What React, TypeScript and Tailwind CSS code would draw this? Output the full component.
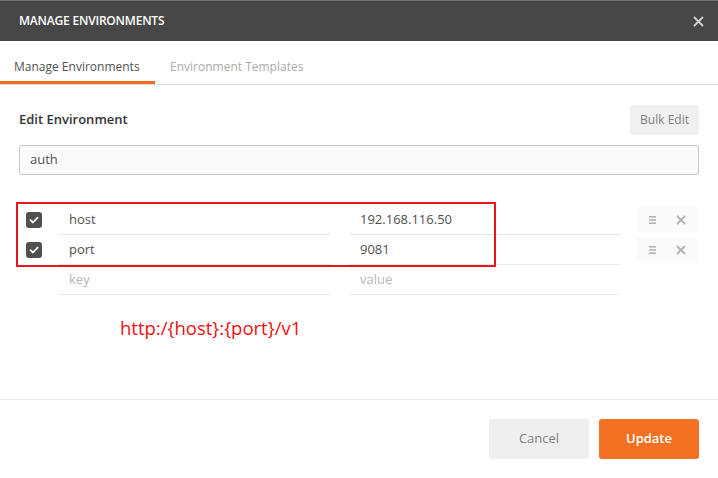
import React from "react";

const rows = [
  { key: "host", value: "192.168.116.50", on: true },
  { key: "port", value: "9081", on: true },
];

function Check() {
  return (
    <div className="ml-[7px] flex h-4 w-4 items-center justify-center rounded-[3px] bg-[#505050]">
      <svg width="10" height="10" viewBox="0 0 10 10" fill="none">
        <path d="M1.5 5.2 L4 7.5 L8.6 2.6" stroke="white" strokeWidth="1.8" strokeLinecap="round" strokeLinejoin="round" />
      </svg>
    </div>
  );
}

function Actions() {
  return (
    <div className="ml-[17px] flex h-[26px] w-[60px] items-center justify-between rounded-[3px] bg-[#fafafa] pl-[12px] pr-[11px]">
      <svg width="7" height="10" viewBox="0 0 7 10">
        <rect x="0" y="1" width="7" height="1.6" fill="#b3b3b3" />
        <rect x="0" y="4.2" width="7" height="1.6" fill="#b3b3b3" />
        <rect x="0" y="7.4" width="7" height="1.6" fill="#b3b3b3" />
      </svg>
      <svg width="10" height="10" viewBox="0 0 10 10">
        <path d="M1 1 L9 9 M9 1 L1 9" stroke="#b3b3b3" strokeWidth="1.8" />
      </svg>
    </div>
  );
}

export default function App() {
  return (
    <div
      className="relative flex h-[478px] w-[718px] flex-col bg-white text-[#505050]"
      style={{ fontFamily: '"Open Sans", "Noto Sans", sans-serif' }}
    >
      <div className="flex h-[41px] items-center justify-between border-t border-[#707070] bg-[#474747] pl-[19px] pr-[14px]">
        <span className="text-[12px] font-semibold tracking-[-0.2px] text-white">MANAGE ENVIRONMENTS</span>
        <svg width="11" height="11" viewBox="0 0 11 11">
          <path d="M1 1 L10 10 M10 1 L1 10" stroke="#d0d0d0" strokeWidth="1.8" />
        </svg>
      </div>

      <div className="flex h-[44px] border-b border-[#dcdcdc]">
        <div className="flex w-[155px] items-center border-b-[3px] border-[#f26b21] pl-[14px] pt-[12px] text-[12px] text-[#505050]">
          Manage Environments
        </div>
        <div className="flex items-center pl-[15px] pt-[9px] text-[12px] text-[#aaaaaa]">Environment Templates</div>
      </div>

      <div className="flex flex-col px-[19px]">
        <div className="mt-[20px] flex h-[30px] items-center justify-between">
          <span className="text-[13px] font-semibold text-[#333]">Edit Environment</span>
          <button className="h-[30px] rounded-[3px] bg-[#f0f0f0] px-[10px] text-[12px] text-[#808080]">Bulk Edit</button>
        </div>
        <div className="mt-[10px] flex h-[30px] items-center rounded-[3px] border border-[#c8c8c8] bg-[#fafafa] px-[10px] text-[13px] text-[#505050]">
          auth
        </div>

        <div className="mt-[30px] flex flex-col">
          {rows.map((r) => (
            <div key={r.key} className="flex h-[30px] items-center">
              <div className="flex w-[40px] items-center">{r.on && <Check />}</div>
              <div className="flex h-[30px] w-[271px] items-center border-b border-[#e8e8e8] pl-[10px] text-[13px]">{r.key}</div>
              <div className="ml-[20px] flex h-[30px] w-[270px] items-center border-b border-[#e8e8e8] pl-[10px] text-[13px]">{r.value}</div>
              <Actions />
            </div>
          ))}
          <div className="flex h-[30px] items-center">
            <div className="w-[40px]" />
            <div className="flex h-[30px] w-[271px] items-center border-b border-[#e8e8e8] pl-[10px] text-[13px] text-[#b5b5b5]">key</div>
            <div className="ml-[20px] flex h-[30px] w-[270px] items-center border-b border-[#e8e8e8] pl-[10px] text-[13px] text-[#b5b5b5]">value</div>
          </div>
        </div>

        <div className="mt-[19px] pl-[101px] text-[18.5px] leading-[28px] text-[#ee1111]">http:/{"{host}"}:{"{port}"}/v1</div>
      </div>

      <div className="absolute left-[16px] top-[202px] h-[65px] w-[480px] border-2 border-[#e8141e]" />

      <div className="mt-auto flex h-[79px] items-center justify-end gap-[10px] border-t border-[#e6e6e6] pr-[19px]">
        <button className="h-[40px] w-[100px] rounded-[3px] bg-[#efefef] text-[13px] text-[#808080]">Cancel</button>
        <button className="h-[40px] w-[100px] rounded-[3px] bg-[#f47023] text-[13px] font-semibold text-white">Update</button>
      </div>
    </div>
  );
}
